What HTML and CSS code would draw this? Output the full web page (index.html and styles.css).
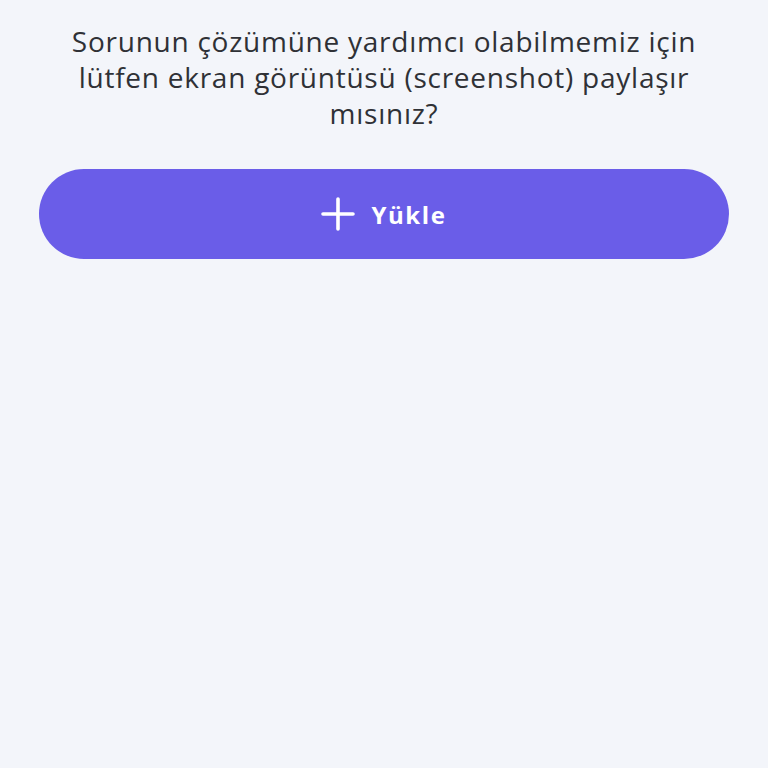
FILE: index.html
```
<!DOCTYPE html>
<html lang="tr">
  <head>
    <meta charset="UTF-8" />
    <meta name="viewport" content="width=device-width, initial-scale=1.0" />
    <title>Ekran görüntüsü yükle</title>
    <link rel="stylesheet" href="styles.css">
  </head>
  <body>
    <div class="container">
      <p class="question">
        Sorunun çözümüne yardımcı olabilmemiz için lütfen ekran görüntüsü (screenshot) paylaşır mısınız?
      </p>
      <button class="upload-button" type="button">
        <svg class="plus-icon" width="34" height="34" viewBox="0 0 34 34" aria-hidden="true">
          <path d="M17 2v30M2 17h30" stroke="#fff" stroke-width="3.6" stroke-linecap="round" fill="none" />
        </svg>
        <span>Yükle</span>
      </button>
    </div>
  </body>
</html>
```

FILE: styles.css
```
body, html {
    margin: 0;
    padding: 0;
    height: 100%;
    background-color: #f3f5fa;
    font-family: 'Open Sans', 'Noto Sans', sans-serif;
}

.container {
    padding: 23px 39px 0;
}

.question {
    margin: 0 0 38px;
    padding: 0 20px;
    text-align: center;
    font-size: 28px;
    line-height: 36px;
    letter-spacing: 0.75px;
    color: #2f3136;
}

.upload-button {
    display: flex;
    align-items: center;
    justify-content: center;
    gap: 16px;
    width: 100%;
    height: 90px;
    border: none;
    border-radius: 45px;
    background-color: #6a5de8;
    color: #ffffff;
    font-family: 'Open Sans', 'Noto Sans', sans-serif;
    font-size: 24px;
    font-weight: 700;
    letter-spacing: 1.6px;
    cursor: pointer;
}

.plus-icon {
    display: block;
}
```
